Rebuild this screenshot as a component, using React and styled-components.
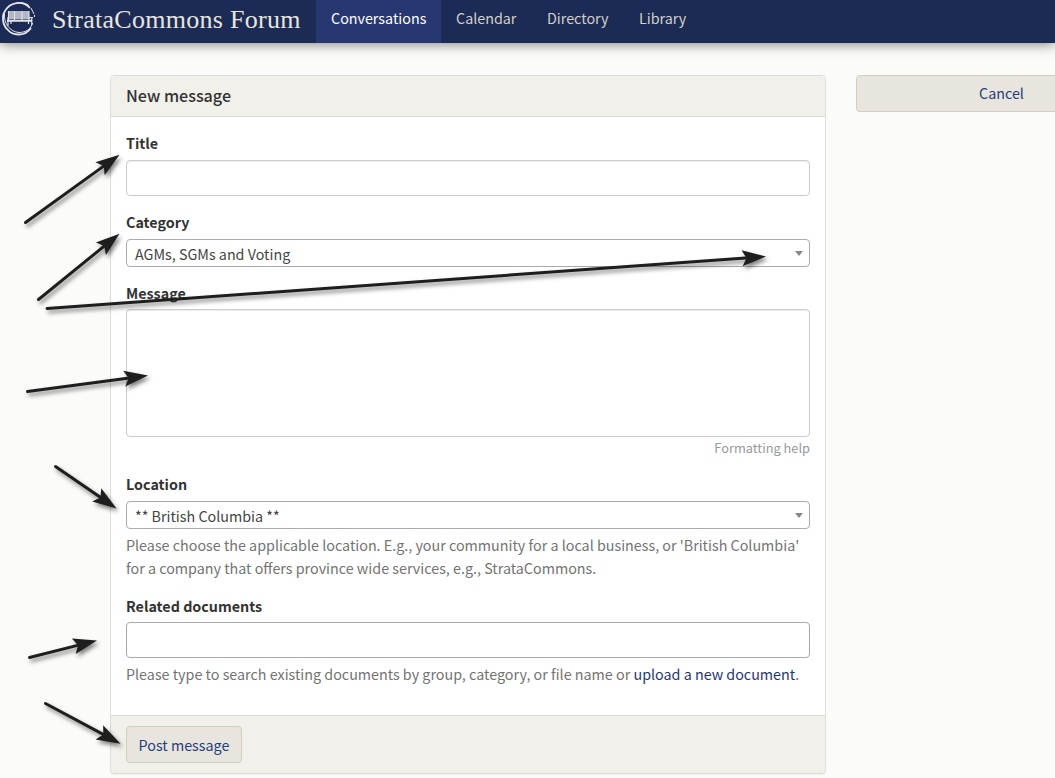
import React from 'react';
import styled, { createGlobalStyle } from 'styled-components';

const Global = createGlobalStyle`
  * { box-sizing: border-box; }
  html, body { margin: 0; height: 778px; overflow: hidden; background: #fbfbf9; }
  body { font: 14.32px/23px "Noto Sans CJK SC", "Open Sans", sans-serif; color: #333; }
`;

const Page = styled.div`
  position: relative;
  height: 778px;
  overflow: hidden;
`;

const NavBar = styled.nav`
  display: flex;
  height: 43px;
  background: #1c2b55;
  box-shadow: 0 1px 12px rgba(0, 0, 0, 0.5);
`;

const Brand = styled.a`
  display: flex;
  width: 316px;
  color: #e8e5df;
  font: 26px/39px "Liberation Serif", serif;
  letter-spacing: 0.28px;
  white-space: nowrap;
`;

const BrandName = styled.span`
  margin-left: 14px;
`;

const NavItem = styled.a`
  padding: 6px 15px 0;
  width: ${(p) => p.$width}px;
  white-space: nowrap;
  color: ${(p) => (p.$active ? '#fff' : '#d2d0c9')};
  background: ${(p) => (p.$active ? '#273771' : 'transparent')};
`;

const Columns = styled.main`
  display: grid;
  grid-template-columns: 716px 291px;
  gap: 30px;
  align-items: start;
  width: 1147px;
  padding: 32px 0 0 110px;
`;

const Panel = styled.form`
  height: 699px;
  display: flex;
  flex-direction: column;
  background: #fff;
  border: 1px solid #dddddb;
  border-radius: 4px;
  box-shadow: 0 1px 1px rgba(0, 0, 0, 0.05);
`;

const PanelHeader = styled.h3`
  margin: 0;
  height: 41px;
  padding: 7px 15px;
  font-size: 16.1px;
  font-weight: 500;
  line-height: 24px;
  background: #f1f0eb;
  border-bottom: 1px solid #dddddb;
  border-radius: 3px 3px 0 0;
`;

const PanelBody = styled.div`
  flex: 1;
  padding: 15px 15px 0;
`;

const PanelFooter = styled.div`
  height: 58px;
  padding: 10px 15px;
  background: #f1f0eb;
  border-top: 1px solid #dddddb;
  border-radius: 0 0 3px 3px;
`;

const Field = styled.div`
  height: ${(p) => p.$height}px;
`;

const Label = styled.label`
  display: block;
  height: ${(p) => p.$height || 23}px;
  margin-bottom: 5px;
  font-weight: 700;
  line-height: 21px;
`;

const Control = styled.div`
  height: ${(p) => p.$height}px;
  background: #fff;
  border: 1px solid ${(p) => (p.$dark ? '#aaa' : '#ccc')};
  border-radius: 4px;
  box-shadow: ${(p) => (p.$dark ? 'none' : 'inset 0 1px 1px rgba(0,0,0,.075)')};
`;

const SelectBox = styled(Control)`
  display: flex;
  justify-content: space-between;
  align-items: center;
  padding: 0 6px 0 8px;
  color: #444;
`;

const Caret = styled.span`
  border: 4px solid transparent;
  border-top: 5px solid #888;
  border-bottom: 0;
`;

const FormattingHelp = styled.a`
  display: block;
  text-align: right;
  font-size: 12.8px;
  line-height: 21px;
  color: #999;
`;

const Help = styled.p`
  margin: 4px 0 0;
  color: #737373;
  white-space: nowrap;
`;

const UploadLink = styled.a`
  color: #1f3674;
`;

const Button = styled.button`
  width: ${(p) => p.$width};
  height: 37px;
  padding: 0 0 ${(p) => (p.$block ? 2 : 0)}px;
  font: inherit;
  color: #253d7c;
  background: #e8e5df;
  border: 1px solid #d5cebd;
  border-radius: 4px;
`;

const Annotations = styled.svg`
  position: absolute;
  inset: 0;
  pointer-events: none;
  filter: drop-shadow(2px 3px 2px rgba(0, 0, 0, 0.5));
`;

const arrows = [
  [25.5, 222.5, 119.5, 154.7],
  [38.5, 299.5, 119.5, 233.7],
  [47, 308.5, 766, 256.5],
  [27.5, 391.5, 148, 375.5],
  [55.5, 466.5, 116.5, 508.5],
  [29.5, 657.5, 97, 640.5],
  [45.5, 703.5, 120.5, 743.7],
];

function Arrow({ from, to }) {
  const dx = to[0] - from[0];
  const dy = to[1] - from[1];
  const length = Math.hypot(dx, dy);
  const angle = (Math.atan2(dy, dx) * 180) / Math.PI;
  return (
    <g transform={`translate(${to[0]} ${to[1]}) rotate(${angle})`}>
      <path d={`M${-length} 0H-17`} stroke="#1e1e1e" strokeWidth="3" strokeLinecap="round" />
      <path d="M0 0L-24-8L-19.500 0L-24 8Z" fill="#1e1e1e" />
    </g>
  );
}

function BenchLogo() {
  return (
    <svg width="38" height="38" viewBox="0 0 38 38" fill="none" stroke="#e4e5ea">
      <path d="M30 8A15.500 15.500 0 0 0 5 11C2 15 2 24 7 29A15 15 0 0 0 31 28" strokeWidth="1.800" />
      <path d="M29 5.500C23 1 12 2 6.500 9M4.500 14C3.500 23 10 32 19 32.500C26 32.500 31 29 32.500 23M31 8L34 14M34.500 15V17" strokeWidth="1" />
      <path d="M8.500 12H29M8.500 14H29M8.500 16H29M8 18H30" strokeWidth="1.400" />
      <path d="M8.500 11V20M14.500 11V20M22 11V20M29 11V20" strokeWidth="1.100" />
      <path d="M7 20.700H32" strokeWidth="2.100" />
      <path d="M8 17V26M31.800 17V25M11 21V24M28.500 21V24M29 17.500H33" strokeWidth="1.200" />
    </svg>
  );
}

export default function App() {
  return (
    <Page>
      <Global />
      <NavBar>
        <Brand>
          <BenchLogo />
          <BrandName>StrataCommons Forum</BrandName>
        </Brand>
        <NavItem $active $width={125}>Conversations</NavItem>
        <NavItem $width={91}>Calendar</NavItem>
        <NavItem $width={92}>Directory</NavItem>
        <NavItem $width={80}>Library</NavItem>
      </NavBar>
      <Columns>
        <Panel>
          <PanelHeader>New message</PanelHeader>
          <PanelBody>
            <Field $height={79}>
              <Label>Title</Label>
              <Control $height={36} />
            </Field>
            <Field $height={71}>
              <Label>Category</Label>
              <SelectBox $height={28} $dark>AGMs, SGMs and Voting<Caret /></SelectBox>
            </Field>
            <Field $height={191}>
              <Label $height={22}>Message</Label>
              <Control $height={128} />
              <FormattingHelp>Formatting help</FormattingHelp>
            </Field>
            <Field $height={122}>
              <Label>Location</Label>
              <SelectBox $height={28} $dark>** British Columbia **<Caret /></SelectBox>
              <Help>
                Please choose the applicable location. E.g., your community for a local business, or 'British Columbia'
                <br />
                for a company that offers province wide services, e.g., StrataCommons.
              </Help>
            </Field>
            <Field $height={92}>
              <Label $height={22}>Related documents</Label>
              <Control $height={36} $dark />
              <Help>
                Please type to search existing documents by group, category, or file name or{' '}
                <UploadLink>upload a new document</UploadLink>.
              </Help>
            </Field>
          </PanelBody>
          <PanelFooter>
            <Button type="button" $width="116px">Post message</Button>
          </PanelFooter>
        </Panel>
        <Button type="button" $width="100%" $block>Cancel</Button>
      </Columns>
      <Annotations width="1055" height="778">
        {arrows.map(([x1, y1, x2, y2]) => (
          <Arrow key={y1} from={[x1, y1]} to={[x2, y2]} />
        ))}
      </Annotations>
    </Page>
  );
}
